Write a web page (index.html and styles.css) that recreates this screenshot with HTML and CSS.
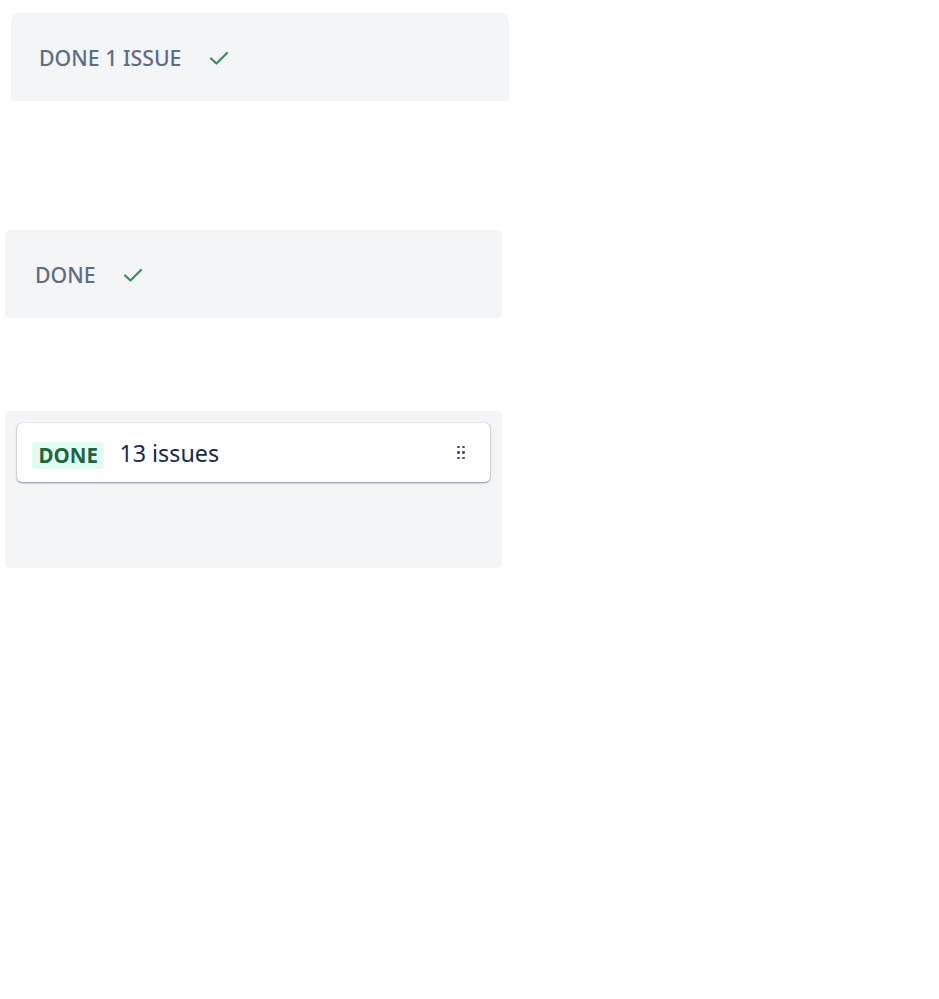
FILE: index.html
```html
<!DOCTYPE html>
<html>
<head>
<meta charset="utf-8">
<link rel="stylesheet" href="styles.css">
</head>
<body>
<div class="panel panel-top">
  <div class="heading"><span>DONE 1 ISSUE</span>
    <svg class="check" width="20" height="16" viewBox="0 0 20 16"><path d="M2 8.5 L7.5 13.5 L18 3" fill="none" stroke="#3a8a5f" stroke-width="2.2" stroke-linecap="round" stroke-linejoin="round"/></svg>
  </div>
</div>
<div class="panel panel-mid">
  <div class="heading"><span>DONE</span>
    <svg class="check" width="20" height="16" viewBox="0 0 20 16"><path d="M2 8.5 L7.5 13.5 L18 3" fill="none" stroke="#3a8a5f" stroke-width="2.2" stroke-linecap="round" stroke-linejoin="round"/></svg>
  </div>
</div>
<div class="panel panel-bottom">
  <div class="card">
    <span class="lozenge">DONE</span>
    <span class="count">13 issues</span>
    <span class="grip">
      <i></i><i></i><i></i><i></i><i></i><i></i>
    </span>
  </div>
</div>
</body>
</html>
```
FILE: styles.css
```css
html, body { margin: 0; padding: 0; background: #fff; }
body { font-family: "Noto Sans", "Open Sans", sans-serif; }
.panel { background: #f4f5f7; box-sizing: border-box; }
.panel-top { margin: 13px 0 0 11px; width: 498px; height: 88px; border-radius: 8px 8px 0 0; }
.panel-mid { margin: 129px 0 0 5px; width: 497px; height: 88px; border-radius: 5px; }
.panel-bottom { margin: 93px 0 0 5px; width: 497px; height: 157px; border-radius: 5px; padding: 12px 12px 0 12px; }
.heading { display: flex; align-items: center; height: 100%; font-size: 21.3px; font-weight: 500; color: #5e6c84; gap: 28px; }
.panel-top .heading { padding-left: 28px; }
.panel-mid .heading { padding-left: 30px; gap: 27px; }
.check { display: block; margin-top: 2px; }
.card { background: #fff; border-radius: 5px; height: 59px; box-shadow: 0 1px 2px rgba(9,30,66,0.45), 0 0 1px rgba(9,30,66,0.4); display: flex; align-items: center; padding: 0 26px 0 15px; box-sizing: border-box; }
.lozenge { background: #e3fcef; color: #1f6446; font-weight: 700; font-size: 20.5px; border-radius: 4px; padding: 0 6.5px; height: 27px; line-height: 27px; margin-top: 6px; }
.count { margin-left: 15px; font-size: 23.3px; color: #172b4d; flex: 1; }
.grip { display: grid; grid-template-columns: 2px 2px; gap: 3px 3px; }
.grip i { display: block; width: 2.5px; height: 2.5px; background: #42526e; border-radius: 50%; }
```
